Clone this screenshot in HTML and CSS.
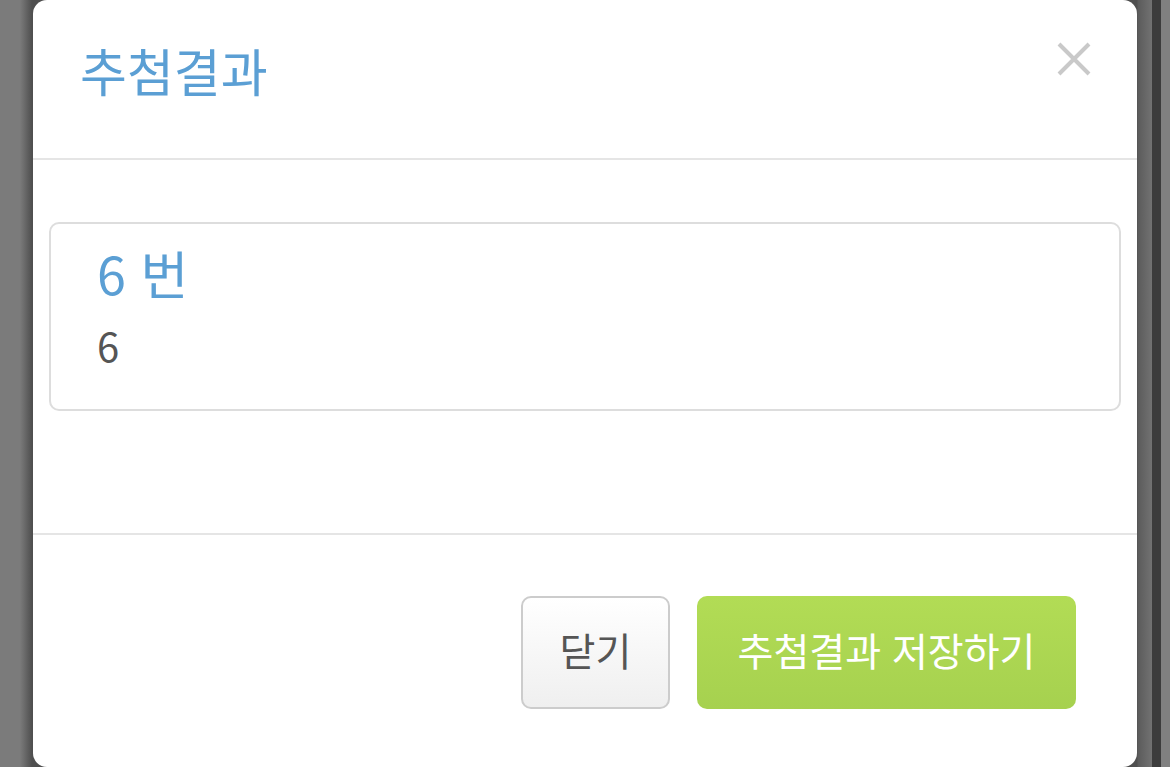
FILE: index.html
```html
<!DOCTYPE html>
<html lang="ko">
<head>
    <meta charset="UTF-8">
    <meta name="viewport" content="width=device-width, initial-scale=1.0">
    <title>추첨결과</title>
    <link rel="stylesheet" href="styles.css">
</head>
<body>
    <div class="modal">
        <div class="modal-header">
            <h4 class="modal-title">추첨결과</h4>
            <button class="close" aria-label="닫기">
                <svg viewBox="0 0 34 34" width="34" height="34">
                    <path d="M2 2 L32 32 M32 2 L2 32" stroke="#c9c9c9" stroke-width="4" fill="none"/>
                </svg>
            </button>
        </div>

        <div class="modal-body">
            <div class="result-panel">
                <h3 class="result-number">6 번</h3>
                <p class="result-text">6</p>
            </div>
        </div>

        <div class="modal-footer">
            <button class="btn btn-default">닫기</button>
            <button class="btn btn-save">추첨결과 저장하기</button>
        </div>
    </div>
</body>
</html>
```

FILE: styles.css
```css
* {
    margin: 0;
    padding: 0;
    box-sizing: border-box;
}

html, body {
    height: 100%;
}

body {
    font-family: "Noto Sans CJK KR", "Noto Sans", sans-serif;
    overflow: hidden;
    background: linear-gradient(to right,
        #7b7b7b 0, #7b7b7b 20px, #4f4f4f 32px,
        #4f4f4f 1137px, #5b5b5b 1138px, #727272 1152px,
        #3c3c3c 1152px, #3c3c3c 1161px,
        #808080 1161px, #808080 100%);
}

.modal {
    width: 1104px;
    height: 767px;
    margin-left: 33px;
    background: #fff;
    border-radius: 14px;
    display: flex;
    flex-direction: column;
}

.modal-header {
    height: 160px;
    padding: 0 46px 17px 47px;
    border-bottom: 2px solid #e5e5e5;
    display: flex;
    align-items: center;
    justify-content: space-between;
}

.modal-title {
    font-size: 51px;
    font-weight: 400;
    color: #5b9fd4;
    line-height: 1.2;
}

.close {
    border: none;
    background: none;
    width: 34px;
    height: 34px;
    margin-bottom: 23px;
    cursor: pointer;
}

.modal-body {
    height: 375px;
    padding: 62px 16px 0;
    border-bottom: 2px solid #e5e5e5;
}

.result-panel {
    height: 189px;
    border: 2px solid #dddddd;
    border-radius: 10px;
    padding: 17px 46px;
}

.result-number {
    font-size: 52px;
    font-weight: 400;
    color: #5b9fd4;
    line-height: 64px;
}

.result-text {
    margin-top: 12px;
    font-size: 40px;
    color: #555;
    line-height: 56px;
}

.modal-footer {
    padding: 61px 61px 0 0;
    display: flex;
    justify-content: flex-end;
    gap: 27px;
}

.btn {
    height: 113px;
    padding-bottom: 8px;
    border-radius: 10px;
    font-family: inherit;
    font-size: 39px;
    cursor: pointer;
}

.btn-default {
    width: 149px;
    border: 2px solid #cccccc;
    background: linear-gradient(#ffffff, #efefef);
    color: #555;
}

.btn-save {
    width: 379px;
    border: none;
    background: linear-gradient(#b2dc55, #a6d14f);
    color: #fff;
}
```
